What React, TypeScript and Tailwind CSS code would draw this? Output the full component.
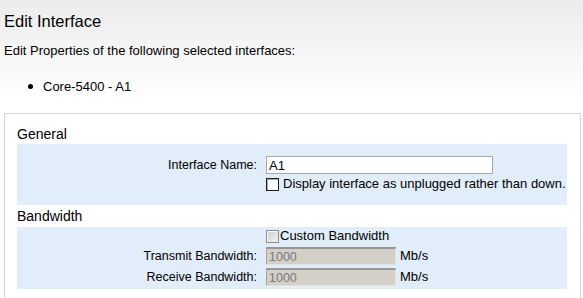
import React from "react";

function Row({ label, children }: { label: string; children: React.ReactNode }) {
  return (
    <div className="flex h-[18px] items-center">
      <div className="w-[249px] pr-[9px] text-right text-[12.5px] leading-[16px] text-black">{label}</div>
      {children}
    </div>
  );
}

function DisabledInput({ value }: { value: string }) {
  return (
    <input
      readOnly
      disabled
      defaultValue={value}
      className="box-border h-[18px] w-[130px] border-t-2 border-l border-b border-r border-t-[#969696] border-l-[#a4a4a4] border-b-[#e4e2de] border-r-[#e4e2de] bg-[#d4d0c8] pl-[2px] text-[12.5px] leading-[14px] text-[#7a7a7a] outline-none"
    />
  );
}

export default function App() {
  return (
    <div className="h-[298px] w-[583px] overflow-hidden bg-[linear-gradient(to_bottom,#ececec,#ffffff_100px)] px-[4px] pt-[11px] font-['Liberation_Sans',Arial,sans-serif] text-black">
      <h1 className="text-[16.5px] leading-[20px]">Edit Interface</h1>
      <p className="mt-[12px] text-[13px] leading-[15px]">Edit Properties of the following selected interfaces:</p>
      <ul className="mt-[21px] text-[13px] leading-[15px]">
        <li className="flex items-center">
          <span className="ml-[24px] h-[5px] w-[5px] rounded-full bg-black" />
          <span className="ml-[10px]">Core-5400 - A1</span>
        </li>
      </ul>
      <div className="mt-[19px] mr-[-2px] h-[200px] border border-b-0 border-[#d4d4d4] bg-white pl-[12px] pr-[13px]">
        <div className="pt-[12px] pb-[1px] text-[14px] leading-[17px]">General</div>
        <div className="flex flex-col gap-[2px] bg-[#e1edf8] pt-[12px] pb-[13px]">
          <Row label="Interface Name:">
            <input
              readOnly
              defaultValue="A1"
              className="box-border h-[18px] w-[227px] border border-[#a5acb2] bg-white pl-[2px] text-[13px] leading-[16px] text-black outline-none"
            />
          </Row>
          <div className="flex h-[16px] items-center pl-[249px]">
            <span className="box-border h-[13px] w-[13px] border border-[#1e1e1e] bg-white shadow-[inset_1px_1px_0_#a8a8a8]" />
            <span className="ml-[4px] text-[13px] leading-[16px]">Display interface as unplugged rather than down.</span>
          </div>
        </div>
        <div className="pt-[3px] pb-[2px] text-[14px] leading-[17px]">Bandwidth</div>
        <div className="flex flex-col gap-[3px] bg-[#e1edf8] pt-[1px] pb-[3px]">
          <div className="flex h-[16px] items-center pl-[249px]">
            <span className="box-border h-[13px] w-[13px] border border-[#8e8e8e] bg-[linear-gradient(135deg,#cfcfcf,#f2f2f2)] shadow-[inset_1px_1px_0_#f8f8f8]" />
            <span className="ml-[1px] text-[13px] leading-[16px]">Custom Bandwidth</span>
          </div>
          <Row label="Transmit Bandwidth:">
            <DisabledInput value="1000" />
            <span className="ml-[4px] text-[13px] leading-[16px]">Mb/s</span>
          </Row>
          <Row label="Receive Bandwidth:">
            <DisabledInput value="1000" />
            <span className="ml-[4px] text-[13px] leading-[16px]">Mb/s</span>
          </Row>
        </div>
      </div>
    </div>
  );
}
